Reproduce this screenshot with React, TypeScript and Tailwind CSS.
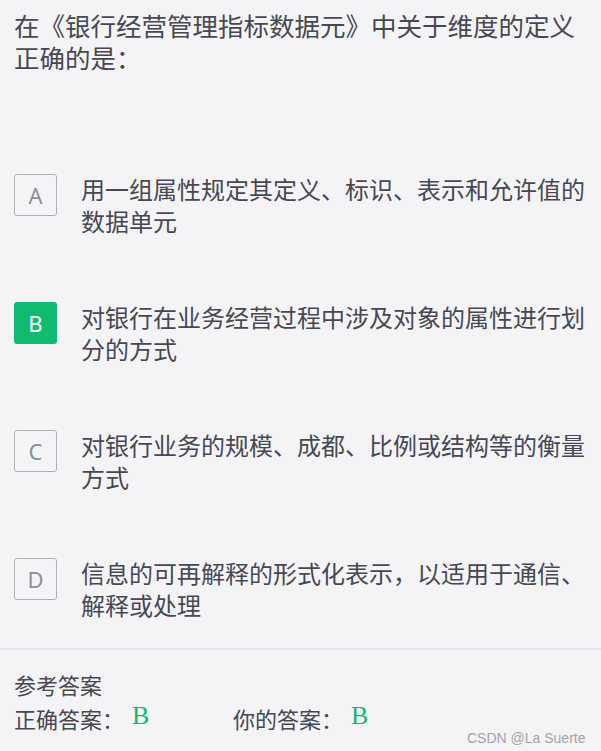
const options = [
  { key: 'A', text: '用一组属性规定其定义、标识、表示和允许值的数据单元' },
  { key: 'B', text: '对银行在业务经营过程中涉及对象的属性进行划分的方式', picked: true },
  { key: 'C', text: '对银行业务的规模、成都、比例或结构等的衡量方式' },
  { key: 'D', text: '信息的可再解释的形式化表示，以适用于通信、解释或处理' },
];

const serif = { fontFamily: '"Liberation Serif", serif' };

export default function App() {
  return (
    <div
      className="w-[601px] h-[751px] overflow-hidden bg-[#f4f4f7] text-[#474852]"
      style={{ fontFamily: '"Noto Sans", "Noto Sans CJK SC", sans-serif' }}
    >
      {/* 题目 */}
      <div className="pl-[14px] pr-[14px] pt-[10px] h-[166px]">
        <p className="text-[25.5px] leading-[32px]">
          在《银行经营管理指标数据元》中关于维度的定义正确的是：
        </p>
      </div>

      {/* 选项 */}
      <div className="flex flex-col">
        {options.map(({ key, text, picked }) => (
          <div key={key} className="flex items-start h-[128px] pl-[14px] pr-[12px] pt-[8px]">
            <span
              className={
                picked
                  ? 'shrink-0 w-[43px] h-[42px] rounded-[3px] bg-[#10bb71] text-white flex items-center justify-center text-[22px]'
                  : 'shrink-0 w-[43px] h-[42px] rounded-[3px] border border-[#aeb1b9] text-[#8c8f98] flex items-center justify-center text-[22px]'
              }
            >
              {key}
            </span>
            <p className="ml-[24px] text-[24px] leading-[32px]">{text}</p>
          </div>
        ))}
      </div>

      {/* 参考答案 */}
      <div className="border-t-2 border-[#e6e6ec] mt-[-30px] pl-[14px] pt-[18px] relative h-full">
        <p className="text-[22px] leading-[34px]">参考答案</p>
        <div className="flex items-baseline text-[22px] leading-[34px]">
          <span className="w-[219px]">
            正确答案：
            <span className="relative -top-[4px] ml-[8px] text-[#12b96f] text-[26px]" style={serif}>B</span>
          </span>
          <span>
            你的答案：
            <span className="relative -top-[4px] ml-[8px] text-[#12b96f] text-[26px]" style={serif}>B</span>
          </span>
        </div>
        <span
          className="absolute left-[467px] top-[78px] text-[14px] text-[#a3a3a6]"
          style={{ fontFamily: '"Liberation Sans", sans-serif' }}
        >
          CSDN @La Suerte
        </span>
      </div>
    </div>
  );
}
